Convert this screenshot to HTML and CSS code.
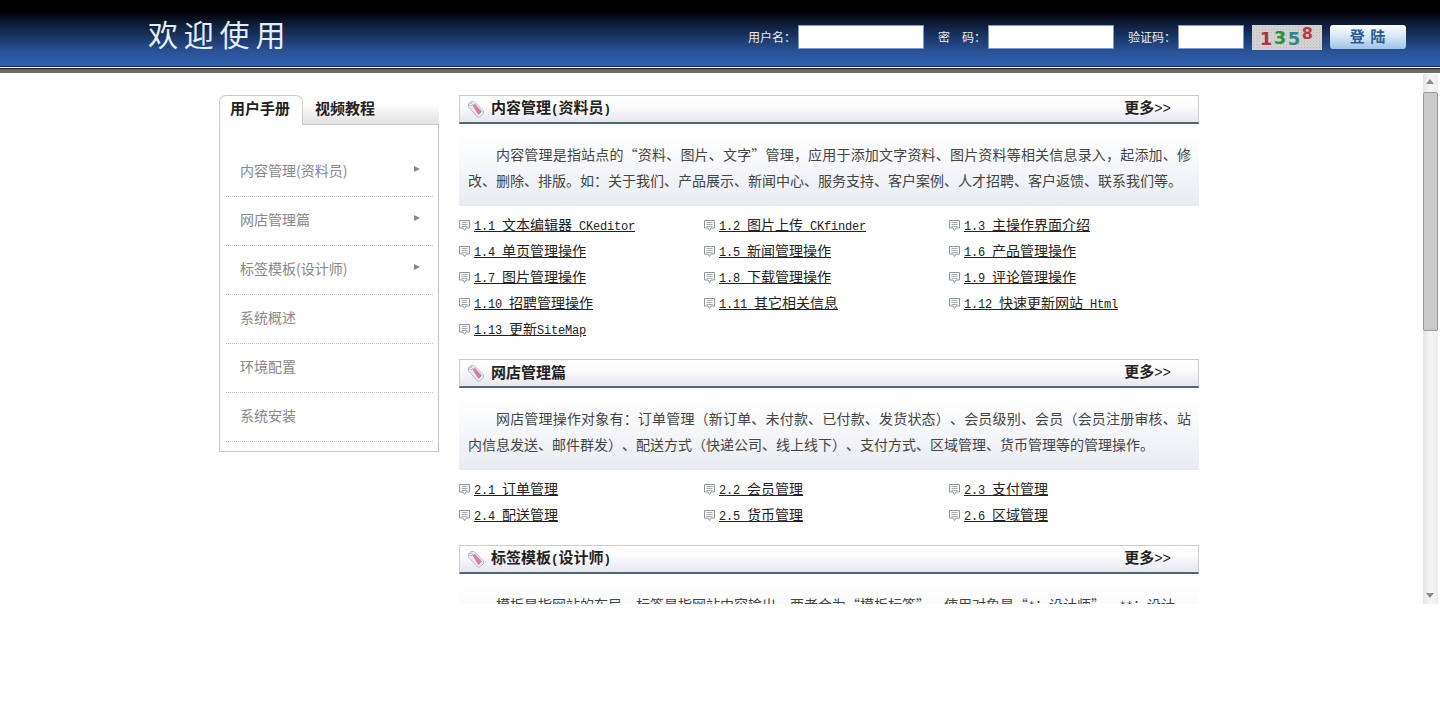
FILE: index.html
```html
<!DOCTYPE html>
<html lang="zh-CN">
<head>
<meta charset="utf-8">
<title>欢迎使用</title>
<link rel="stylesheet" href="styles.css">
</head>
<body>
<svg class="defs" width="0" height="0" aria-hidden="true">
  <symbol id="tag" viewBox="0 0 18 18">
    <path d="M1.500 3.500 4 1.500h3l9.500 9.500v2.500l-3.500 3.500h-2.500L1.500 7z" fill="#e9ecf2" stroke="#b4bfce" stroke-width="1"/>
    <path d="M6 5.500 7.500 4l7 7.500-3 3z" fill="#e07f9c" stroke="#c9678a" stroke-width=".6"/>
    <circle cx="4" cy="4.500" r="1.300" fill="#fff" stroke="#96a3b5" stroke-width=".7"/>
  </symbol>
  <symbol id="note" viewBox="0 0 11 11">
    <path d="M.5.500h10v7.500H7L5.500 10.500 4 8H.5z" fill="#fbfcfc" stroke="#8d979b"/>
    <path d="M2.500 2.500h6M2.500 4.500h6M2.500 6.500h6" stroke="#a3acb0"/>
  </symbol>
</svg>

<header class="topbar">
  <h1 class="welcome">欢迎使用</h1>
  <form class="login">
    <label class="field">用户名：<input class="inp inp-long" type="text"></label>
    <label class="field">密　码：<input class="inp inp-long" type="text"></label>
    <label class="field">验证码：<input class="inp inp-short" type="text"></label>
    <span class="captcha"><b class="c1">1</b><b class="c2">3</b><b class="c3">5</b><b class="c4">8</b></span>
    <button class="btn" type="button">登 陆</button>
  </form>
</header>
<div class="rule"></div>

<div class="frame">
  <div class="viewport">
    <div class="wrap">
      <aside class="side">
        <div class="tabs">
          <span class="tab tab-on">用户手册</span>
          <span class="tab tab-off">视频教程</span>
        </div>
        <ul class="menu">
          <li class="menu-item has-sub">内容管理(资料员)</li>
          <li class="menu-item has-sub">网店管理篇</li>
          <li class="menu-item has-sub">标签模板(设计师)</li>
          <li class="menu-item">系统概述</li>
          <li class="menu-item">环境配置</li>
          <li class="menu-item">系统安装</li>
        </ul>
      </aside>

      <main class="main">
        <section class="sec">
          <div class="bar">
            <svg class="tag"><use href="#tag"/></svg>
            <h2 class="bar-title">内容管理<span class="paren">(</span>资料员<span class="paren">)</span></h2>
            <a class="more">更多<span class="chev">&gt;&gt;</span></a>
          </div>
          <p class="intro">内容管理是指站点的“资料、图片、文字”管理，应用于添加文字资料、图片资料等相关信息录入，起添加、修改、删除、排版。如：关于我们、产品展示、新闻中心、服务支持、客户案例、人才招聘、客户返馈、联系我们等。</p>
          <ul class="links">
            <li class="lnk"><svg class="note"><use href="#note"/></svg><a><span class="en">1.1 </span>文本编辑器<span class="en"> CKeditor</span></a></li>
            <li class="lnk"><svg class="note"><use href="#note"/></svg><a><span class="en">1.2 </span>图片上传<span class="en"> CKfinder</span></a></li>
            <li class="lnk"><svg class="note"><use href="#note"/></svg><a><span class="en">1.3 </span>主操作界面介绍</a></li>
            <li class="lnk"><svg class="note"><use href="#note"/></svg><a><span class="en">1.4 </span>单页管理操作</a></li>
            <li class="lnk"><svg class="note"><use href="#note"/></svg><a><span class="en">1.5 </span>新闻管理操作</a></li>
            <li class="lnk"><svg class="note"><use href="#note"/></svg><a><span class="en">1.6 </span>产品管理操作</a></li>
            <li class="lnk"><svg class="note"><use href="#note"/></svg><a><span class="en">1.7 </span>图片管理操作</a></li>
            <li class="lnk"><svg class="note"><use href="#note"/></svg><a><span class="en">1.8 </span>下载管理操作</a></li>
            <li class="lnk"><svg class="note"><use href="#note"/></svg><a><span class="en">1.9 </span>评论管理操作</a></li>
            <li class="lnk"><svg class="note"><use href="#note"/></svg><a><span class="en">1.10 </span>招聘管理操作</a></li>
            <li class="lnk"><svg class="note"><use href="#note"/></svg><a><span class="en">1.11 </span>其它相关信息</a></li>
            <li class="lnk"><svg class="note"><use href="#note"/></svg><a><span class="en">1.12 </span>快速更新网站<span class="en"> Html</span></a></li>
            <li class="lnk"><svg class="note"><use href="#note"/></svg><a><span class="en">1.13 </span>更新<span class="en">SiteMap</span></a></li>
          </ul>
        </section>

        <section class="sec">
          <div class="bar">
            <svg class="tag"><use href="#tag"/></svg>
            <h2 class="bar-title">网店管理篇</h2>
            <a class="more">更多<span class="chev">&gt;&gt;</span></a>
          </div>
          <p class="intro">网店管理操作对象有：订单管理（新订单、未付款、已付款、发货状态）、会员级别、会员（会员注册审核、站内信息发送、邮件群发）、配送方式（快递公司、线上线下）、支付方式、区域管理、货币管理等的管理操作。</p>
          <ul class="links">
            <li class="lnk"><svg class="note"><use href="#note"/></svg><a><span class="en">2.1 </span>订单管理</a></li>
            <li class="lnk"><svg class="note"><use href="#note"/></svg><a><span class="en">2.2 </span>会员管理</a></li>
            <li class="lnk"><svg class="note"><use href="#note"/></svg><a><span class="en">2.3 </span>支付管理</a></li>
            <li class="lnk"><svg class="note"><use href="#note"/></svg><a><span class="en">2.4 </span>配送管理</a></li>
            <li class="lnk"><svg class="note"><use href="#note"/></svg><a><span class="en">2.5 </span>货币管理</a></li>
            <li class="lnk"><svg class="note"><use href="#note"/></svg><a><span class="en">2.6 </span>区域管理</a></li>
          </ul>
        </section>

        <section class="sec">
          <div class="bar">
            <svg class="tag"><use href="#tag"/></svg>
            <h2 class="bar-title">标签模板<span class="paren">(</span>设计师<span class="paren">)</span></h2>
            <a class="more">更多<span class="chev">&gt;&gt;</span></a>
          </div>
          <p class="intro">模板是指网站的布局，标签是指网站内容输出，两者合为“模板标签”，使用对象是“<span class="en">*</span>：设计师”，<span class="en">**</span>：设计</p>
        </section>
      </main>
    </div>
  </div>

  <div class="scrollbar">
    <span class="arrow arrow-up"></span>
    <span class="thumb"></span>
    <span class="arrow arrow-down"></span>
  </div>
</div>
</body>
</html>
```
FILE: styles.css
```css
* { box-sizing: border-box; }
html, body { margin: 0; padding: 0; background: #fff; }
body { font-family: "Noto Sans CJK SC", "Liberation Sans", sans-serif; font-size: 14px; color: #333; overflow: hidden; height: 723px; text-spacing-trim: space-all; }
ul { list-style: none; margin: 0; padding: 0; }
h1, h2, p { margin: 0; }
.defs { display: block; height: 0; }

.topbar { height: 66px; background: linear-gradient(#000 0, #000 12px, #0d1d38 24px, #2a5398 52px, #3060ae 66px); display: flex; align-items: flex-start; padding-left: 148px; }
.welcome { font-size: 30px; font-weight: 400; color: #e6edf5; letter-spacing: 5.8px; line-height: 36px; margin-top: 15px; width: 600px; white-space: nowrap; }
.login { display: flex; align-items: flex-start; padding-top: 25px; }
.field { display: flex; align-items: center; font-size: 12px; color: #e8eef6; line-height: 22px; height: 24px; margin-right: 14px; white-space: nowrap; }
.inp { border: 1px solid #7f9cc6; background: #fff; height: 24px; margin: 0 0 0 2px; padding: 0; }
.inp-long { width: 126px; }
.inp-short { width: 66px; margin-right: -6px; }
.captcha { width: 70px; height: 25px; background: #d2d2d2 radial-gradient(#bcbcbc 35%, transparent 40%) 0 0 / 3px 3px; display: flex; justify-content: center; align-items: flex-end; font-family: "DejaVu Sans", sans-serif; font-size: 18px; line-height: 14px; letter-spacing: 1.500px; margin-right: 8px; }
.captcha b { display: block; }
.c1 { color: #b5303a; margin-bottom: 4px; }
.c2 { color: #2d9040; margin-bottom: 5px; }
.c3 { color: #2a8a8a; margin-bottom: 4px; }
.c4 { color: #b83a44; margin-bottom: 9px; font-size: 16px; }
.btn { width: 76px; height: 24px; border: 0; border-radius: 3px; background: linear-gradient(#fdfeff, #dbe9f6 45%, #9cc3e8); color: #2a5c8f; font: bold 15px/22px "Noto Sans CJK SC", sans-serif; letter-spacing: 1px; padding: 0 0 2px; }
.rule { height: 8px; background: linear-gradient(#1a2a44 0, #1a2a44 1px, #fff 1px, #fff 2px, #222 2px, #222 3px, #666 3px, #6a6e6e 7px, #fff 7px); }

.frame { display: flex; height: 530px; }
.viewport { width: 1423px; height: 530px; overflow: hidden; padding: 21px 5px 0 0; }
.wrap { width: 980px; margin: 0 auto; display: flex; align-items: flex-start; gap: 20px; }

.side { width: 220px; flex: none; }
.tabs { display: flex; height: 29px; position: relative; z-index: 1; }
.tab { font-size: 15px; font-weight: 700; line-height: 24px; color: #222; text-align: center; }
.tab-on { width: 84px; height: 30px; background: #fff; border: 1px solid #ccc; border-bottom: 0; border-radius: 7px 7px 0 0; padding-right: 2px; }
.tab-off { flex: 1; padding-right: 52px; background: linear-gradient(#fff, #fff 30%, #e2e2e2); height: 29px; line-height: 26px; }
.menu { border: 1px solid #c8c8c8; height: 328px; padding: 23px 5px 0 6px; }
.menu-item { height: 49px; line-height: 45px; padding: 0 0 0 14px; color: #888; border-bottom: 1px dotted #bbb; position: relative; }
.has-sub::after { content: ""; position: absolute; left: 188px; top: 18px; border-left: 6px solid #888; border-top: 3.500px solid transparent; border-bottom: 3.500px solid transparent; }

.main { width: 740px; flex: none; }
.sec { margin-bottom: 16px; }
.bar { height: 29px; display: flex; align-items: center; padding: 0 27px 0 7px; border: 1px solid #ccc; border-bottom: 2px solid #4b6a7c; background: linear-gradient(#fff, #fdfdfe 35%, #e6e6ee); }
.tag { width: 18px; height: 18px; flex: none; margin-right: 6px; }
.bar-title { flex: 1; font-size: 15px; font-weight: 700; color: #222; line-height: 24px; margin-bottom: 2px; }
.paren { font-family: "Liberation Mono", monospace; font-size: 12.500px; }
.more { font-size: 15px; font-weight: 700; color: #222; line-height: 24px; margin-bottom: 2px; }
.chev { font-family: "Liberation Mono", monospace; font-size: 14px; font-weight: 400; }
.intro { height: 82px; padding: 17px 8px 13px 9px; line-height: 26px; text-indent: 28px; text-align: justify; color: #444; background: linear-gradient(#fff, #fff 15%, #e8ecf2); }
.links { display: grid; grid-template-columns: repeat(3, 245px); grid-auto-rows: 26px; margin-top: 7px; }
.lnk { display: flex; align-items: center; height: 26px; white-space: nowrap; color: #222; }
.note { width: 11px; height: 11px; flex: none; margin: -2px 4px 0 0; }
.lnk a { text-decoration: underline; color: #222; line-height: 24px; margin-bottom: 1px; }
.en { font-family: "Liberation Mono", monospace; font-size: 12px; letter-spacing: -.2px; white-space: pre; }

.scrollbar { width: 15px; height: 530px; flex: none; position: relative; background: linear-gradient(90deg, #e4e4e4, #f6f6f6 50%, #ececec); }
.arrow { position: absolute; left: 3px; border-left: 4px solid transparent; border-right: 4px solid transparent; }
.arrow-up { top: 5px; border-bottom: 5px solid #7f8c99; }
.arrow-down { bottom: 6px; border-top: 5px solid #7f8c99; }
.thumb { position: absolute; left: 0; top: 18px; width: 15px; height: 239px; border: 1px solid #9a9a9a; border-radius: 2px; background: #c9c9c9; }
```
